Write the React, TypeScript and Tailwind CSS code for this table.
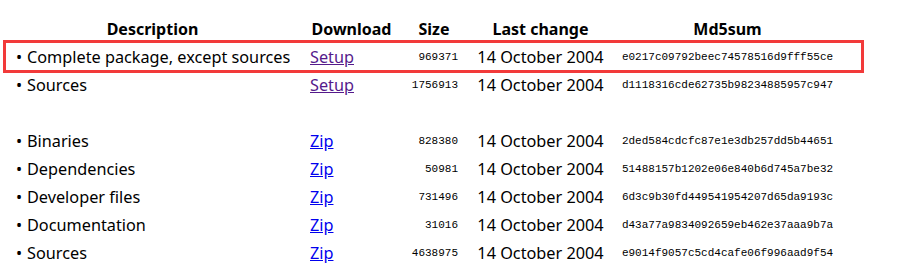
import React from 'react';

type Row = {
  desc: string;
  link: string;
  visited?: boolean;
  size: string;
  date: string;
  md5: string;
};

const rows: (Row | null)[] = [
  { desc: 'Complete package, except sources', link: 'Setup', visited: true, size: '969371', date: '14 October 2004', md5: 'e0217c09792beec74578516d9fff55ce' },
  { desc: 'Sources', link: 'Setup', visited: true, size: '1756913', date: '14 October 2004', md5: 'd1118316cde62735b98234885957c947' },
  null,
  { desc: 'Binaries', link: 'Zip', size: '828380', date: '14 October 2004', md5: '2ded584cdcfc87e1e3db257dd5b44651' },
  { desc: 'Dependencies', link: 'Zip', size: '50981', date: '14 October 2004', md5: '51488157b1202e06e840b6d745a7be32' },
  { desc: 'Developer files', link: 'Zip', size: '731496', date: '14 October 2004', md5: '6d3c9b30fd449541954207d65da9193c' },
  { desc: 'Documentation', link: 'Zip', size: '31016', date: '14 October 2004', md5: 'd43a77a9834092659eb462e37aaa9b7a' },
  { desc: 'Sources', link: 'Zip', size: '4638975', date: '14 October 2004', md5: 'e9014f9057c5cd4cafe06f996aad9f54' },
];

const cols = 'grid grid-cols-[295px_103px_62px_151px_223px]';
const mono = "font-['Liberation_Mono',monospace] text-[11px]";

export default function App() {
  return (
    <div className="relative w-[905px] h-[272px] bg-white text-black font-['Noto_Sans',sans-serif] text-[16.25px]">
      <div className="pt-[15px] pl-[5px]">
        <div className={`${cols} h-[28px] items-center font-bold text-[16px]`}>
          <div className="text-center">Description</div>
          <div className="text-center">Download</div>
          <div className="text-center">Size</div>
          <div className="text-center">Last change</div>
          <div className="text-center">Md5sum</div>
        </div>
        {rows.map((r, i) =>
          r ? (
            <div key={i} className={`${cols} h-[28px] items-center`}>
              <div className="pl-[11px] flex items-center">
                <span className="w-[11px]">•</span>
                <span>{r.desc}</span>
              </div>
              <div className="pl-[10px]">
                <a href="#" className={`underline ${r.visited ? 'text-[#551a8b]' : 'text-[#0000ee]'}`}>{r.link}</a>
              </div>
              <div className={`text-right pr-[7px] ${mono}`}>{r.size}</div>
              <div className="text-center">{r.date}</div>
              <div className={`text-center ${mono}`}>{r.md5}</div>
            </div>
          ) : (
            <div key={i} className="h-[28px]" />
          )
        )}
      </div>
      <div className="absolute left-[3px] top-[40px] w-[861px] h-[33px] border-[3px] border-[#f23a3a] pointer-events-none" />
    </div>
  );
}
